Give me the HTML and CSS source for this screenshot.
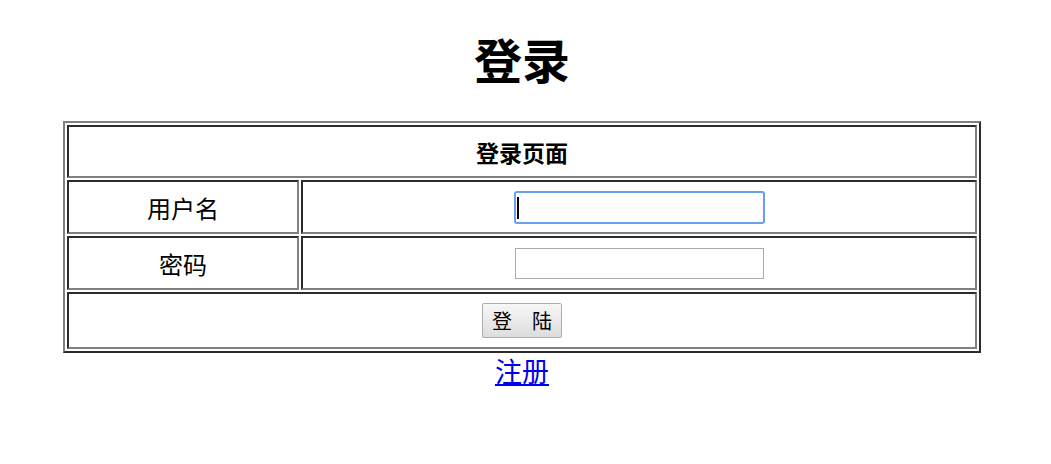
FILE: index.html
```html
<!DOCTYPE html>
<html lang="zh-CN">
<head>
  <meta charset="UTF-8" />
  <title>登录</title>
  <link rel="stylesheet" href="styles.css">
</head>
<body>
  <h1 class="title">登录</h1>
  <form class="login-form" action="#">
    <table class="login-table">
      <tr class="row-head">
        <th colspan="2">登录页面</th>
      </tr>
      <tr class="row-field">
        <td class="label">用户名</td>
        <td class="field">
          <div class="input-wrap">
            <input type="text" name="username" class="text-input is-focused" />
            <span class="caret"></span>
          </div>
        </td>
      </tr>
      <tr class="row-field">
        <td class="label">密码</td>
        <td class="field">
          <div class="input-wrap">
            <input type="password" name="password" class="text-input" />
          </div>
        </td>
      </tr>
      <tr class="row-submit">
        <td colspan="2">
          <button type="submit" class="submit-btn">登　陆</button>
        </td>
      </tr>
    </table>
  </form>
  <div class="register">
    <a href="#">注册</a>
  </div>
</body>
</html>
```

FILE: styles.css
```css
html, body {
  background: #fff;
  color: #000;
  font-family: "Noto Sans CJK SC", "Liberation Sans", sans-serif;
}

body {
  margin: 0 7px 0 0;
}

.title {
  margin: 34px 0 39px;
  font-size: 48px;
  line-height: 48px;
  font-weight: bold;
  text-align: center;
}

.login-form {
  margin: 0;
}

.login-table {
  width: 918px;
  margin: 0 auto;
  border-collapse: separate;
  border-spacing: 2px;
  border: 2px solid;
  border-color: #808080 #2b2b2b #2b2b2b #808080;
}

.login-table th,
.login-table td {
  padding: 0;
  border: 2px solid;
  border-color: #2b2b2b #808080 #808080 #2b2b2b;
  text-align: center;
  vertical-align: middle;
  font-size: 24px;
}

.row-head th {
  height: 49px;
  font-size: 23px;
  font-weight: bold;
}

.row-field td {
  height: 50px;
}

.row-field .label {
  width: 228px;
}

.row-submit td {
  height: 53px;
}

.input-wrap {
  position: relative;
  display: flex;
  justify-content: center;
}

.text-input {
  box-sizing: border-box;
  width: 249px;
  height: 31px;
  margin: 0;
  padding: 0 4px;
  border: 1px solid #a9a9a9;
  border-radius: 0;
  font-size: 20px;
  outline: none;
}

.text-input.is-focused {
  width: 251px;
  height: 33px;
  border: 2px solid #6a9eee;
  border-radius: 3px;
}

.caret {
  position: absolute;
  left: 214px;
  top: 6px;
  width: 2px;
  height: 22px;
  background: #000;
}

.submit-btn {
  display: block;
  box-sizing: border-box;
  width: 80px;
  height: 35px;
  margin: 0 auto;
  padding: 0;
  border: 1px solid #adadad;
  border-radius: 2px;
  background: linear-gradient(#f7f7f7, #dddddd);
  font-family: "Noto Sans CJK SC", sans-serif;
  font-size: 20px;
  color: #000;
}

.register {
  margin-top: 1px;
  text-align: center;
  font-size: 27px;
  line-height: 34px;
}

.register a {
  color: #0000ee;
}
```
